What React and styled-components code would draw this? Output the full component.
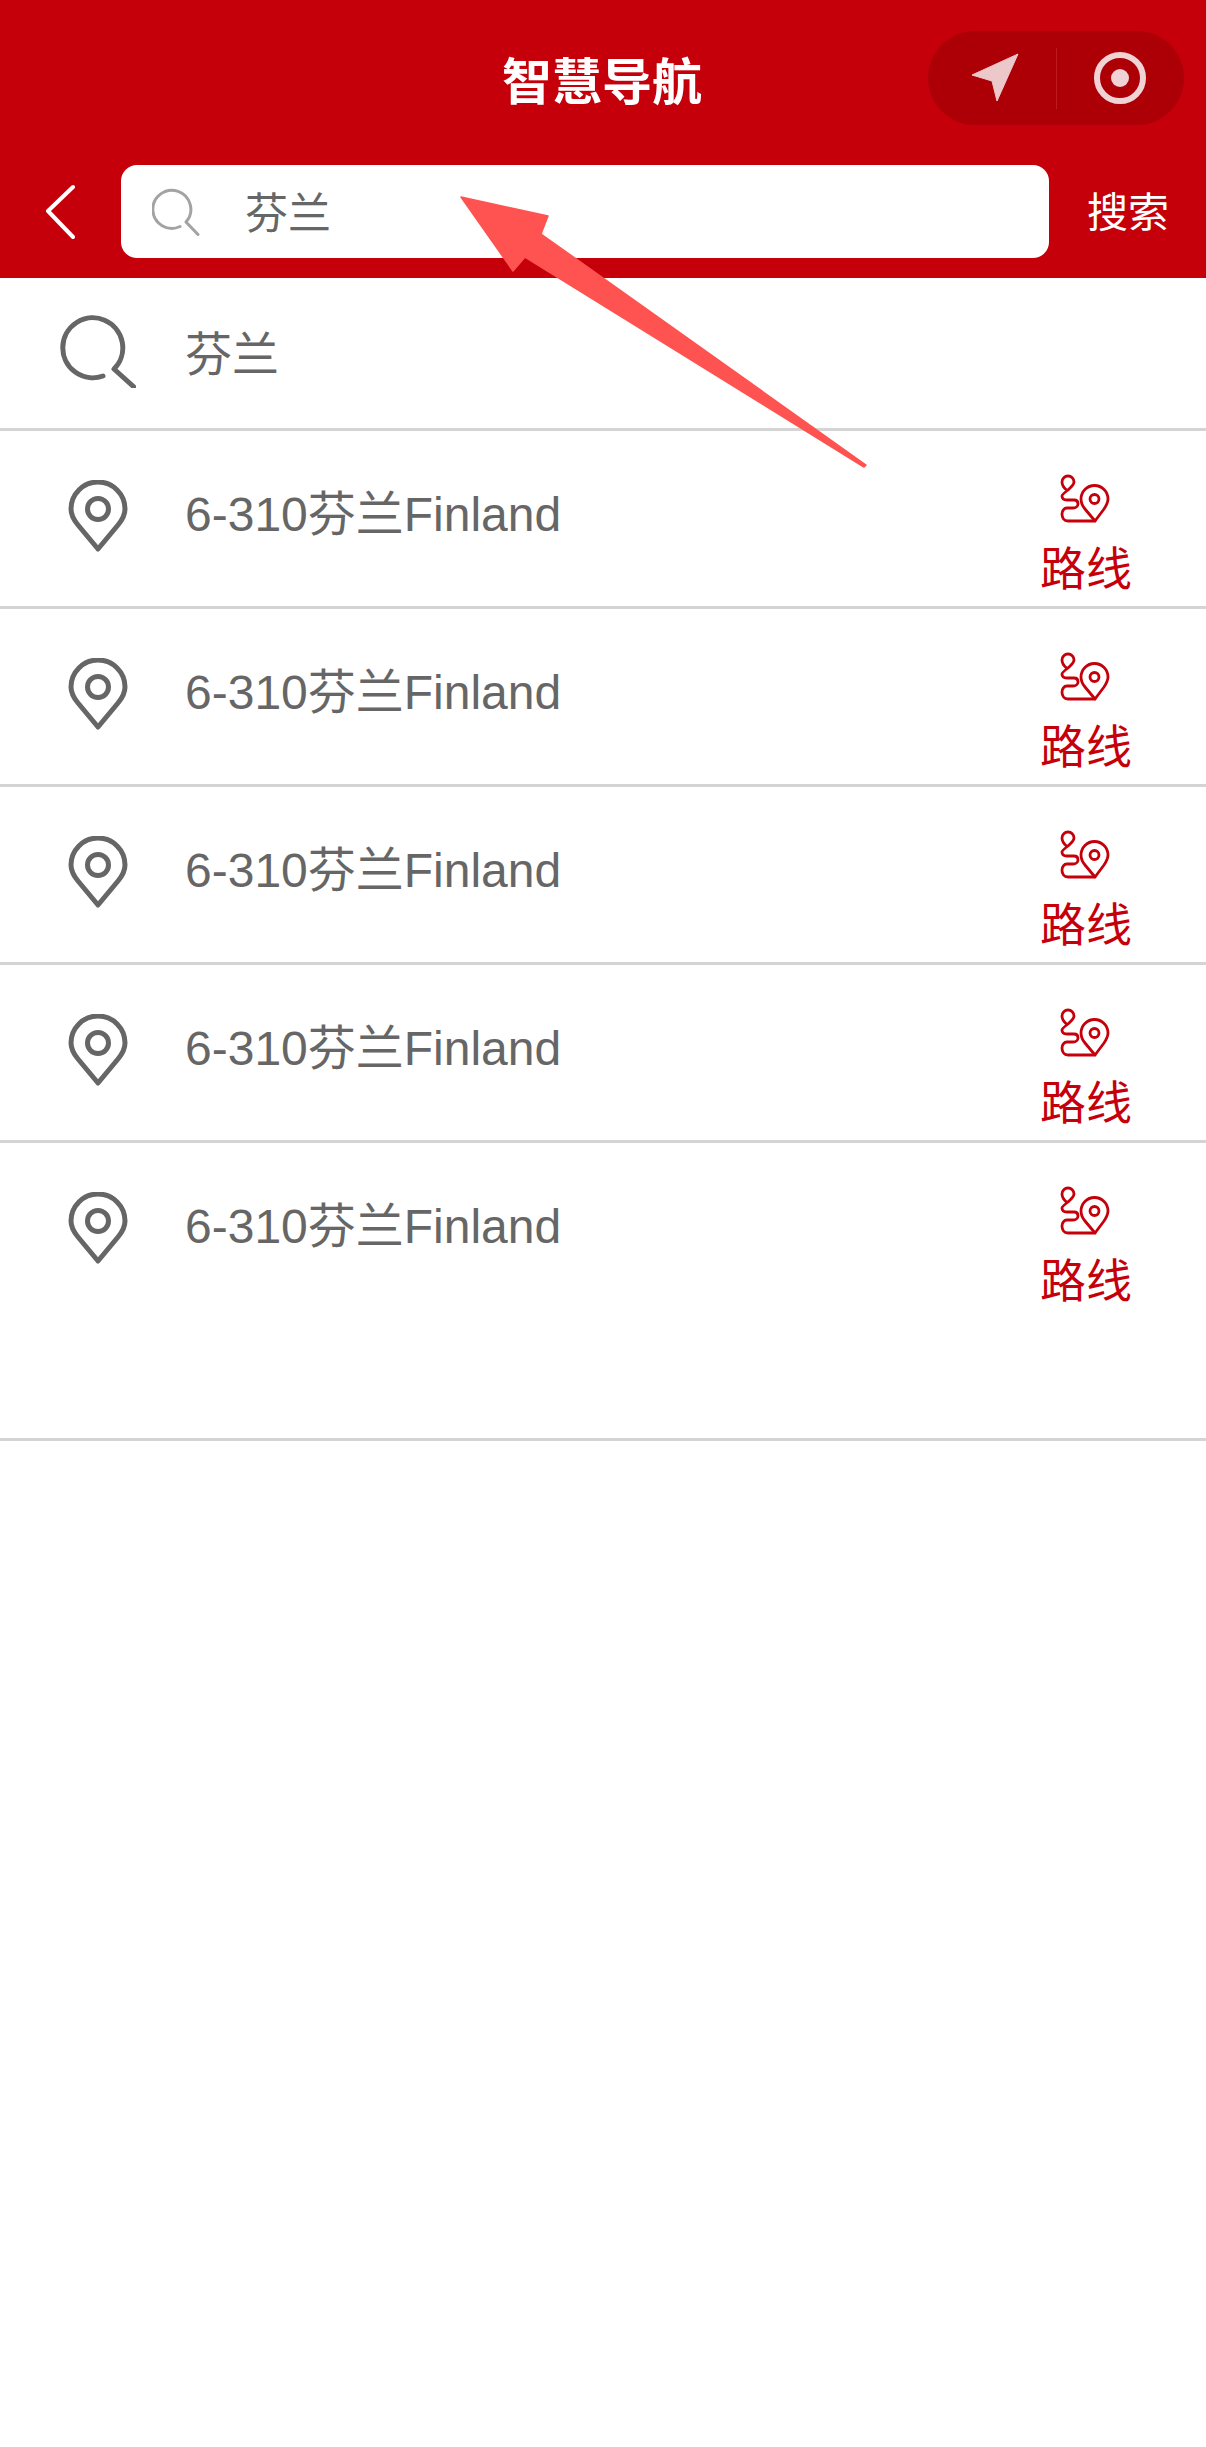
import React from "react";
import styled, { createGlobalStyle } from "styled-components";

const places = [1, 2, 3, 4, 5];

export default function App() {
  return (
    <Page>
      <GlobalStyle />
      <Header>
        <TitleRow>
          <span />
          <Title>智慧导航</Title>
          <Capsule>
            <CapsuleButton>
              <svg width="60" height="50" viewBox="0 0 60 50">
                <polygon points="56,1 10,22 30,28 35,48" fill="#edc8cb" stroke="#edc8cb" strokeWidth="1" strokeLinejoin="round" />
              </svg>
            </CapsuleButton>
            <CapsuleDivider />
            <CapsuleButton>
              <svg width="54" height="54" viewBox="0 0 54 54">
                <circle cx="27" cy="27" r="23" fill="none" stroke="#f0d3d5" strokeWidth="6" />
                <circle cx="27" cy="27" r="9" fill="#f0d3d5" />
              </svg>
            </CapsuleButton>
          </Capsule>
        </TitleRow>
        <SearchRow>
          <BackButton>
            <svg width="30" height="56" viewBox="0 0 30 56">
              <polyline points="28,3 3,27 28,53" fill="none" stroke="#fff" strokeWidth="4" strokeLinecap="round" strokeLinejoin="round" />
            </svg>
          </BackButton>
          <SearchBox>
            <svg width="50" height="50" viewBox="0 0 50 50">
              <path d="M28 39.5 A19 19 0 1 1 34 35 L46 47.5" fill="none" stroke="#a3a3a5" strokeWidth="3" strokeLinecap="round" strokeLinejoin="round" />
            </svg>
            <SearchText>芬兰</SearchText>
          </SearchBox>
          <SearchAction>搜索</SearchAction>
        </SearchRow>
      </Header>

      <SuggestRow>
        <IconCell>
          <svg width="76" height="76" viewBox="0 0 76 76">
            <path d="M43 64 A30 30 0 1 1 54 57 L74 75" fill="none" stroke="#666" strokeWidth="5" strokeLinecap="round" strokeLinejoin="round" />
          </svg>
        </IconCell>
        <SuggestText>芬兰</SuggestText>
      </SuggestRow>

      {places.map((id, i) => (
        <PlaceRow key={id} $last={i === places.length - 1}>
          <IconCell>
            <svg width="60" height="72" viewBox="0 0 60 72">
              <path d="M30 69 L10 45 C5 39 3 34 3 29 A27 27 0 0 1 57 29 C57 34 55 39 50 45 Z" fill="none" stroke="#666" strokeWidth="5" strokeLinejoin="round" />
              <circle cx="30" cy="29" r="10.5" fill="none" stroke="#666" strokeWidth="5" />
            </svg>
          </IconCell>
          <PlaceName>6-310芬兰Finland</PlaceName>
          <RouteLink>
            <svg width="64" height="64" viewBox="0 0 64 64">
              <path d="M12.5 24 C9 21 8 19 8 16 A6 6 0 0 1 20 16 C20 19 17 21 14 24 C10 27 8 29 8 30 C8 33 10 34 13 34 L20 34 C23 34 24 36 24 38 C24 40 22 42 19 42 L13 42 C10 42 8 45 8 48 C8 52 10 55 14 55 L41 55" fill="none" stroke="#c5000a" strokeWidth="2.8" strokeLinecap="round" strokeLinejoin="round" />
              <path d="M41 55 L31 43 C28.5 40 27 37 27 33 A13.5 13.5 0 0 1 54 33 C54 37 52 40 50 43 Z" fill="none" stroke="#c5000a" strokeWidth="2.8" strokeLinejoin="round" />
              <circle cx="40.5" cy="33" r="4.5" fill="none" stroke="#c5000a" strokeWidth="2.8" />
            </svg>
            <RouteLabel>路线</RouteLabel>
          </RouteLink>
        </PlaceRow>
      ))}

      <Annotation viewBox="0 0 1206 2447">
        <polygon points="461,197 548,216 541,234 866,465 864,467 525,257 513,271" fill="#fe5350" stroke="#fe5350" strokeWidth="1.5" strokeLinejoin="round" />
      </Annotation>
    </Page>
  );
}

const GlobalStyle = createGlobalStyle`
  html, body {
    margin: 0;
    padding: 0;
    background: #fff;
  }
`;

const Page = styled.div`
  position: relative;
  width: 1206px;
  height: 2447px;
  overflow: hidden;
  background: #fff;
  font-family: "Liberation Sans", "Noto Sans CJK SC", sans-serif;
`;

const Header = styled.header`
  height: 278px;
  background: #c5000a;
  box-sizing: border-box;
  padding-top: 31px;
`;

const TitleRow = styled.div`
  display: grid;
  grid-template-columns: 1fr auto 1fr;
  align-items: center;
  height: 94px;
  padding-right: 22px;
`;

const Title = styled.h1`
  margin: 0;
  padding: 10px 0 0 20px;
  font-size: 50px;
  font-weight: 700;
  line-height: 1;
  color: #fff;
`;

const Capsule = styled.div`
  justify-self: end;
  display: flex;
  align-items: center;
  width: 256px;
  height: 94px;
  border-radius: 47px;
  background: #ad0006;
`;

const CapsuleButton = styled.div`
  flex: 1;
  display: flex;
  align-items: center;
  justify-content: center;
`;

const CapsuleDivider = styled.div`
  width: 1px;
  height: 61px;
  background: #bf1a20;
`;

const SearchRow = styled.div`
  display: flex;
  align-items: center;
  height: 93px;
  margin-top: 40px;
  padding-left: 45px;
`;

const BackButton = styled.div`
  display: flex;
  width: 76px;
`;

const SearchBox = styled.div`
  display: flex;
  align-items: center;
  gap: 43px;
  box-sizing: border-box;
  width: 928px;
  height: 93px;
  padding-left: 31px;
  border-radius: 16px;
  background: #fff;
`;

const SearchText = styled.span`
  padding-bottom: 3px;
  font-size: 43px;
  color: #666;
`;

const SearchAction = styled.span`
  margin-left: 38px;
  padding-bottom: 5px;
  font-size: 41px;
  color: #fff;
`;

const SuggestRow = styled.div`
  display: flex;
  align-items: center;
  box-sizing: border-box;
  height: 153px;
  border-bottom: 3px solid #d4d4d4;
`;

const IconCell = styled.div`
  display: flex;
  justify-content: center;
  flex: none;
  box-sizing: border-box;
  width: 185px;
  padding: 0 0 6px 11px;
`;

const SuggestText = styled.span`
  padding-bottom: 6px;
  font-size: 47px;
  color: #666;
`;

const PlaceRow = styled.div`
  display: flex;
  align-items: center;
  box-sizing: border-box;
  height: ${(p) => (p.$last ? "298px" : "178px")};
  padding: 0 74px ${(p) => (p.$last ? "120px" : "0")} 0;
  border-bottom: 3px solid #d4d4d4;
`;

const PlaceName = styled.span`
  flex: 1;
  padding-bottom: 18px;
  font-size: 48px;
  color: #666;
`;

const RouteLink = styled.div`
  display: flex;
  flex-direction: column;
  align-items: center;
  gap: 6px;
  width: 92px;
  padding-top: 30px;
`;

const RouteLabel = styled.span`
  font-size: 46px;
  line-height: 66px;
  color: #c5000a;
`;

const Annotation = styled.svg`
  position: absolute;
  top: 0;
  left: 0;
  width: 1206px;
  height: 2447px;
  pointer-events: none;
`;
